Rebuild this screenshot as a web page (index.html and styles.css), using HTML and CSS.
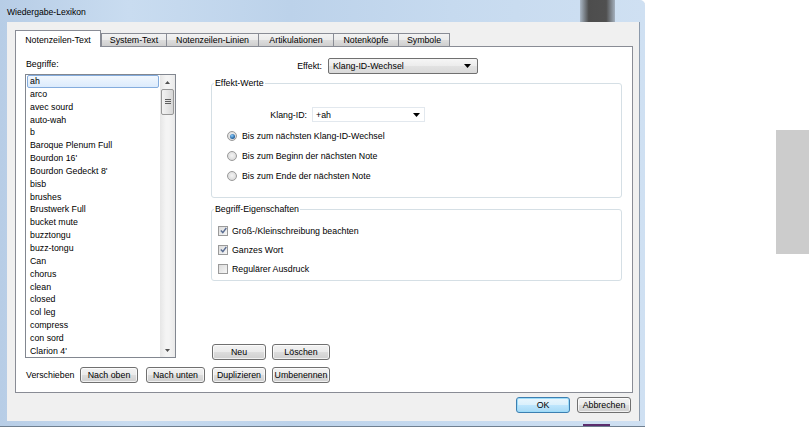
FILE: index.html
```html
<!DOCTYPE html>
<html lang="de">
<head>
<meta charset="utf-8">
<title>Wiedergabe-Lexikon</title>
<link rel="stylesheet" href="styles.css">
</head>
<body>
<div class="window">
  <div class="titlebar">
    <span class="title">Wiedergabe-Lexikon</span>
    <span class="tb-blob"></span>
  </div>
  <div class="client">
    <div class="tabs">
      <div class="tab active">Notenzeilen-Text</div>
      <div class="tab">System-Text</div>
      <div class="tab">Notenzeilen-Linien</div>
      <div class="tab">Artikulationen</div>
      <div class="tab">Notenköpfe</div>
      <div class="tab">Symbole</div>
    </div>
    <div class="pane">
      <div class="left-col">
        <div class="lbl">Begriffe:</div>
        <div class="listbox">
          <ul class="items">
            <li class="sel">ah</li>
            <li>arco</li>
            <li>avec sourd</li>
            <li>auto-wah</li>
            <li>b</li>
            <li>Baroque Plenum Full</li>
            <li>Bourdon 16'</li>
            <li>Bourdon Gedeckt 8'</li>
            <li>bisb</li>
            <li>brushes</li>
            <li>Brustwerk Full</li>
            <li>bucket mute</li>
            <li>buzztongu</li>
            <li>buzz-tongu</li>
            <li>Can</li>
            <li>chorus</li>
            <li>clean</li>
            <li>closed</li>
            <li>col leg</li>
            <li>compress</li>
            <li>con sord</li>
            <li>Clarion 4'</li>
          </ul>
          <div class="scrollbar">
            <div class="sb-btn"><svg width="5" height="3" viewBox="0 0 5 3"><path d="M0 3L2.5 0L5 3z" fill="#505050"/></svg></div>
            <div class="sb-track"><div class="thumb"><span class="grip"></span></div></div>
            <div class="sb-btn"><svg width="5" height="3" viewBox="0 0 5 3"><path d="M0 0L5 0L2.5 3z" fill="#505050"/></svg></div>
          </div>
        </div>
      </div>
      <div class="right-col">
        <div class="effekt-row">
          <span class="effekt-lbl">Effekt:</span>
          <div class="combo combo-ro">
            <span>Klang-ID-Wechsel</span>
            <svg width="7" height="4" viewBox="0 0 7 4"><path d="M0 0H7L3.5 4z" fill="#000"/></svg>
          </div>
        </div>
        <fieldset class="group g1">
          <legend>Effekt-Werte</legend>
          <div class="klang-row">
            <span class="klang-lbl">Klang-ID:</span>
            <div class="combo combo-ed">
              <span>+ah</span>
              <svg width="7" height="4" viewBox="0 0 7 4"><path d="M0 0H7L3.5 4z" fill="#000"/></svg>
            </div>
          </div>
          <div class="opt-row"><span class="radio on"></span><span>Bis zum nächsten Klang-ID-Wechsel</span></div>
          <div class="opt-row"><span class="radio"></span><span>Bis zum Beginn der nächsten Note</span></div>
          <div class="opt-row"><span class="radio"></span><span>Bis zum Ende der nächsten Note</span></div>
        </fieldset>
        <fieldset class="group g2">
          <legend>Begriff-Eigenschaften</legend>
          <div class="chk-row"><span class="check"><svg width="7" height="7" viewBox="0 0 7 7"><path d="M0.8 3.6L2.8 5.6L6.3 1" stroke="#5a6d92" stroke-width="1.4" fill="none"/></svg></span><span>Groß-/Kleinschreibung beachten</span></div>
          <div class="chk-row"><span class="check"><svg width="7" height="7" viewBox="0 0 7 7"><path d="M0.8 3.6L2.8 5.6L6.3 1" stroke="#5a6d92" stroke-width="1.4" fill="none"/></svg></span><span>Ganzes Wort</span></div>
          <div class="chk-row"><span class="check"></span><span>Regulärer Ausdruck</span></div>
        </fieldset>
        <div class="btn-row">
          <button class="btn w54">Neu</button>
          <button class="btn w58">Löschen</button>
        </div>
      </div>
      <div class="bottom-row">
        <span class="move-lbl">Verschieben</span>
        <button class="btn w58">Nach oben</button>
        <button class="btn w59 gap8">Nach unten</button>
        <button class="btn w54 gap7">Duplizieren</button>
        <button class="btn w58 gap6">Umbenennen</button>
      </div>
    </div>
    <div class="footer">
      <button class="btn w54 default">OK</button>
      <button class="btn w54">Abbrechen</button>
    </div>
  </div>
</div>
<div class="side-gray"></div>
</body>
</html>
```

FILE: styles.css
```css
* { box-sizing: border-box; }

html, body {
  margin: 0;
  padding: 0;
}

body {
  width: 809px;
  height: 427px;
  overflow: hidden;
  background: #ffffff;
  display: flex;
  align-items: flex-start;
  font-family: "Liberation Sans", Arial, sans-serif;
  font-size: 8.8px;
  color: #000;
}

.window {
  width: 645px;
  height: 427px;
  display: flex;
  flex-direction: column;
  border-top-right-radius: 5px;
  background:
    linear-gradient(to right, transparent 583px, #5b2d6e 583px, #5b2d6e 610px, transparent 610px) left bottom / 100% 3px no-repeat,
    linear-gradient(to right, #b7cde6 0, #c9dcf0 20%, #bcd2ea 45%, #c6daef 70%, #cfe0f2 100%);
  box-shadow: inset 0 -1px 0 #6f7f90;
}

.titlebar {
  height: 22px;
  display: flex;
  align-items: center;
  padding-left: 7px;
  flex: none;
}

.title {
  font-size: 8.6px;
  padding-top: 1px;
}

.tb-blob {
  margin-left: auto;
  margin-right: 30px;
  width: 35px;
  height: 22px;
  background: linear-gradient(to right, rgba(70,70,70,0.25), #4d4d4d 25%, #505050 75%, rgba(70,70,70,0.3));
}

.client {
  flex: 1;
  margin: 0 5px 6px 7px;
  background: #f0f0f0;
  border-right: 1px solid #8c9aab;
  display: flex;
  flex-direction: column;
}

/* Tabs */
.tabs {
  margin-top: 8px;
  padding-left: 8px;
  display: flex;
  align-items: flex-end;
  height: 16px;
}

.tab {
  height: 13px;
  border: 1px solid #898c95;
  border-bottom: none;
  margin-left: -1px;
  background: linear-gradient(#f3f3f3, #ebebeb 50%, #dddddd 51%, #cfcfcf);
  text-align: center;
  line-height: 12px;
  white-space: nowrap;
}

.tab:nth-child(2) { width: 66px; margin-left: 0; }
.tab:nth-child(3) { width: 93px; }
.tab:nth-child(4) { width: 76px; }
.tab:nth-child(5) { width: 66px; }
.tab:nth-child(6) { width: 52px; }

.tab.active {
  width: 86px;
  height: 17px;
  margin-left: 0;
  margin-bottom: -1px;
  background: #ffffff;
  position: relative;
  z-index: 1;
  line-height: 17px;
  padding-top: 1px;
}

/* Pane */
.pane {
  margin-left: 8px;
  width: 618px;
  height: 347px;
  border: 1px solid #898c95;
  background: #ffffff;
  padding: 10px 7px 9px 9px;
  display: grid;
  grid-template-columns: 151px 413px;
  grid-template-rows: 303px 16px;
  column-gap: 35px;
  row-gap: 7px;
}

.left-col {
  display: flex;
  flex-direction: column;
}

.lbl {
  height: 14px;
  line-height: 14px;
  padding-left: 1px;
  margin-bottom: 3px;
}

.listbox {
  width: 151px;
  height: 284px;
  border: 1px solid #828790;
  display: flex;
}

.items {
  list-style: none;
  margin: 0;
  padding: 0 1px;
  width: 134px;
  overflow: hidden;
}

.items li {
  height: 12.85px;
  line-height: 12.85px;
  padding-left: 3px;
  white-space: nowrap;
}

.items li.sel {
  border: 1px solid #84acdd;
  border-radius: 2px;
  padding-left: 2px;
  line-height: 11px;
  background: linear-gradient(#f1f7fe, #dcebfc);
}

.scrollbar {
  width: 15px;
  display: flex;
  flex-direction: column;
  background: linear-gradient(to right, #e6e6e6, #f4f4f4 40%, #f4f4f4 60%, #e9e9e9);
}

.sb-btn {
  height: 14px;
  display: flex;
  align-items: center;
  justify-content: center;
}

.sb-track {
  flex: 1;
  padding: 0 1px;
}

.thumb {
  height: 26px;
  border: 1px solid #979797;
  border-radius: 2px;
  background: linear-gradient(to right, #f3f3f3, #e6e6e6 50%, #d6d6d6);
  display: flex;
  align-items: center;
  justify-content: center;
}

.grip {
  width: 6px;
  height: 6px;
  background: linear-gradient(#5e5e5e 0 1px, transparent 1px 2px, #5e5e5e 2px 3px, transparent 3px 4px, #5e5e5e 4px 5px, transparent 5px);
}

/* Right column */
.right-col {
  display: flex;
  flex-direction: column;
}

.effekt-row {
  margin-top: 1px;
  height: 16px;
  display: flex;
  align-items: center;
  gap: 6px;
}

.effekt-lbl {
  width: 111px;
  text-align: right;
}

.combo {
  height: 16px;
  display: flex;
  align-items: center;
  justify-content: space-between;
  padding: 0 6px 0 4px;
}

.combo-ro {
  width: 150px;
  border: 1px solid #707070;
  border-radius: 2px;
  background: linear-gradient(#f6f6f6, #ececec 50%, #e2e2e2 51%, #d9d9d9);
}

.combo-ed {
  width: 113px;
  height: 15px;
  border: 1px solid #e2e8ee;
  background: #ffffff;
  padding: 0 4px 0 3px;
}

.group {
  margin: 0 2px 0 0;
  padding: 0;
  border: 1px solid #d5dfe5;
  border-radius: 3px;
  min-width: 0;
}

.group legend {
  margin-left: 2px;
  padding: 0 1px;
  line-height: 12px;
  height: 12px;
}

.g1 {
  margin-top: 3px;
  padding-top: 18px;
  padding-bottom: 11px;
}

.g2 {
  margin-top: 5px;
  padding-top: 6px;
  padding-bottom: 2px;
}

.klang-row {
  height: 15px;
  display: flex;
  align-items: center;
  gap: 5px;
  margin-bottom: 4px;
}

.klang-lbl {
  width: 95px;
  text-align: right;
}

.opt-row {
  height: 20px;
  display: flex;
  align-items: center;
  gap: 5px;
  padding-left: 15px;
}

.radio {
  width: 10px;
  height: 10px;
  border-radius: 50%;
  border: 1px solid #9a9a9a;
  background: radial-gradient(circle at 50% 45%, #f4f4f4, #d2d2d2);
  display: flex;
  align-items: center;
  justify-content: center;
}

.radio.on::after {
  content: "";
  width: 5px;
  height: 5px;
  border-radius: 50%;
  background: radial-gradient(circle at 40% 35%, #8fd0ff, #2a6aa8 60%, #1c4b7c);
}

.chk-row {
  height: 19px;
  display: flex;
  align-items: center;
  gap: 4px;
  padding-left: 6px;
}

.check {
  width: 10px;
  height: 10px;
  border: 1px solid #9a9a9a;
  background: linear-gradient(135deg, #dcdcdc, #f6f6f6);
  display: flex;
  align-items: center;
  justify-content: center;
}

.btn-row {
  margin-top: auto;
  display: flex;
  padding-left: 1px;
  gap: 6px;
  height: 16px;
}

/* Buttons */
.btn {
  height: 16px;
  padding: 0;
  border: 1px solid #707070;
  border-radius: 3px;
  background: linear-gradient(#f2f2f2, #ebebeb 50%, #dddddd 51%, #cfcfcf);
  box-shadow: inset 0 0 0 1px rgba(255,255,255,0.7);
  font-family: "Liberation Sans", Arial, sans-serif;
  font-size: 8.8px;
  color: #000;
  line-height: 13px;
  white-space: nowrap;
}

.btn.default {
  border-color: #3c7fb1;
  background: linear-gradient(#eaf6fd, #d9f0fc 50%, #bee6fd 51%, #a7d9f5);
  box-shadow: inset 0 0 0 1px #9ddcf9;
}

.w54 { width: 54px; }
.w58 { width: 58px; }
.w59 { width: 59px; }
.gap8 { margin-left: 8px; }
.gap7 { margin-left: 7px; }
.gap6 { margin-left: 6px; }

.bottom-row {
  grid-column: 1 / 3;
  display: flex;
  align-items: center;
  height: 16px;
}

.move-lbl {
  width: 55px;
  padding-left: 1px;
}

.footer {
  height: 28px;
  display: flex;
  justify-content: flex-end;
  padding: 4px 8px 0 0;
  gap: 7px;
}

.side-gray {
  margin-top: 130px;
  margin-left: 131px;
  width: 33px;
  height: 124px;
  background: #cccccc;
}
```
